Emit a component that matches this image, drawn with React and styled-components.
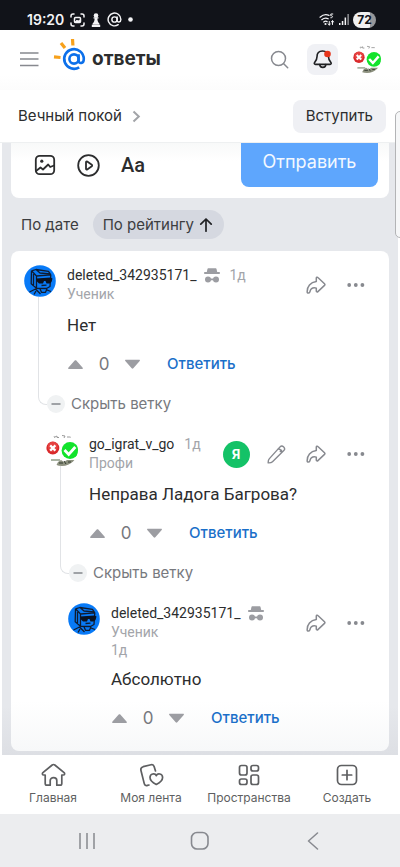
import React from "react";
import styled, { createGlobalStyle } from "styled-components";

const ui = `Inter, "Liberation Sans", sans-serif`;
const body = `Roboto, "Liberation Sans", sans-serif`;

const GlobalStyle = createGlobalStyle`
  * { box-sizing: border-box; }
  body { margin: 0; background: #fff; color: #2c2d2e; font-family: ${body}; }
  button { margin: 0; padding: 0; border: 0; background: none; color: inherit; font: inherit; cursor: pointer; }
  a { color: inherit; text-decoration: none; }
  p, h1 { margin: 0; }
  svg { display: block; flex: none; }
`;

const Page = styled.div`
  position: relative;
  min-height: 100vh;
  display: flex;
  flex-direction: column;
  overflow: hidden;
`;

const StatusBar = styled.div`
  height: 30px;
  padding: 9px 24px 0 27px;
  display: flex;
  align-items: center;
  justify-content: space-between;
  background: #111319;
  color: #f4f4f6;
`;
const StatusGroup = styled.div`
  display: flex;
  align-items: center;
  gap: ${(p) => p.$gap}px;
`;
const Clock = styled.span`
  font: 600 14px/18px ${ui};
`;
const Battery = styled.span`
  width: 23px;
  height: 16px;
  border-radius: 8px;
  background: linear-gradient(90deg, #f0f0f0 72%, #96979a 72%);
  color: #111319;
  font: 700 12px/16px ${ui};
  text-align: center;
`;

const Header = styled.header`
  height: 60px;
  padding: 0 19px 2px;
  display: flex;
  align-items: center;
  justify-content: space-between;
  background: linear-gradient(#fff 75%, #fcfcfc);
`;
const HeaderGroup = styled.div`
  display: flex;
  align-items: center;
  gap: ${(p) => p.$gap}px;
`;
const Logo = styled.a`
  display: flex;
  align-items: center;
  gap: 5px;
  font: 700 19px/24px ${ui};
  color: #2c2d2e;
`;
const IconButton = styled.button`
  display: grid;
  place-items: center;
  width: ${(p) => p.$size || 20}px;
  height: ${(p) => p.$size || 20}px;
  border-radius: 8px;
  background: ${(p) => (p.$filled ? "#f0f1f5" : "transparent")};
  color: ${(p) => p.$color || "#87898f"};
`;

const SpaceBar = styled.div`
  height: 53px;
  padding: 0 14px 0 18px;
  display: flex;
  align-items: center;
  justify-content: space-between;
  border-bottom: 1px solid #eef0f1;
`;
const SpaceLink = styled.a`
  display: flex;
  align-items: center;
  gap: 10px;
  font: 400 15px/20px ${ui};
`;
const JoinButton = styled.button`
  height: 33px;
  padding: 0 13px;
  border-radius: 8px;
  background: #eff0f4;
  && { font: 400 15px/20px ${ui}; }
`;

const Main = styled.main`
  flex: 1;
  margin: 0 2px;
  padding: 0 9px 4px;
  background: linear-gradient(#e6e8ec 92%, #dddfe4);
`;
const Composer = styled.section`
  height: 55px;
  padding: 0 11px 11px 23px;
  display: flex;
  align-items: stretch;
  justify-content: space-between;
  border-radius: 0 0 8px 8px;
  background: linear-gradient(#f8f9f9, #fff 18px);
`;
const Tools = styled.div`
  display: flex;
  align-items: center;
  gap: 21px;
`;
const ToolButton = styled.button`
  display: grid;
  place-items: center;
  min-width: 22px;
  height: 24px;
  && { font: 500 20px/24px ${body}; }
`;
const SendButton = styled.button`
  width: 137px;
  padding-bottom: 7px;
  border-radius: 0 0 8px 8px;
  background: #5ea6fd;
  color: #f3f8ff;
  && { font: 400 18px/24px ${ui}; }
`;

const SortBar = styled.div`
  height: 53px;
  padding-left: 10px;
  display: flex;
  align-items: center;
  gap: 14px;
`;
const SortButton = styled.button`
  height: 29px;
  padding: ${(p) => (p.$active ? "0 11px 0 10px" : "0")};
  display: flex;
  align-items: center;
  gap: 5px;
  border-radius: 15px;
  background: ${(p) => (p.$active ? "#d5d8e0" : "transparent")};
  color: #3c3d40;
  && { font: 400 15px/20px ${ui}; }
`;

const Thread = styled.section`
  padding: 14px 13px 21px;
  border-radius: 8px;
  background: linear-gradient(#fff 90%, #f7f8f9);
`;
const Comment = styled.article`
  margin-left: ${(p) => p.$depth * 22}px;
  display: grid;
  grid-template-columns: 32px 1fr;
  column-gap: 11px;
  & + & { margin-top: 20px; }
`;
const Rail = styled.div`
  grid-row: 1 / span 2;
  display: flex;
  flex-direction: column;
`;
const ThreadLine = styled.span`
  flex: 1;
  width: 9px;
  margin: 0 0 9px 14px;
  border: solid #e1e3e6;
  border-width: 0 0 1px 1px;
  border-bottom-left-radius: 8px;
`;
const CommentHead = styled.header`
  min-height: 40px;
  display: flex;
  align-items: flex-start;
`;
const Author = styled.div`
  flex: 1;
  min-width: 0;
  padding-right: 12px;
  display: flex;
  flex-wrap: wrap;
  column-gap: 10px;
`;
const Name = styled.a`
  display: flex;
  align-items: center;
  gap: 7px;
  font: 400 14px/20px ${body};
`;
const Muted = styled.span`
  display: block;
  font: 400 14px/${(p) => (p.$tall ? 20 : 18)}px ${body};
  color: #a3a5aa;
`;
const Actions = styled.div`
  display: flex;
`;
const Badge = styled.span`
  width: 27px;
  height: 27px;
  border-radius: 50%;
  background: #14c267;
  color: #fff;
  font: 700 13px/27px ${ui};
  text-align: center;
`;
const CommentText = styled.p`
  margin-top: 8px;
  font: 400 17px/24px ${body};
`;
const Votes = styled.div`
  height: 24px;
  margin-top: 15px;
  display: flex;
  align-items: center;
  gap: 14px;
`;
const Score = styled.span`
  min-width: 12px;
  font: 400 17px/24px ${ui};
  color: #77797e;
  text-align: center;
`;
const ReplyButton = styled.button`
  margin-left: 12px;
  color: #1a6fc9;
  && { font: 500 15px/20px ${ui}; }
`;
const Collapse = styled.button`
  grid-column: 2;
  justify-self: start;
  height: 20px;
  margin: 18px 0 0 -20px;
  display: flex;
  align-items: center;
  gap: 6px;
  color: #77797e;
  && { font: 400 15px/20px ${ui}; }
`;

const TabBar = styled.nav`
  height: 59px;
  padding: 8px 4px 0;
  display: grid;
  grid-template-columns: repeat(4, 1fr);
  background: #fff;
  color: #5e5f61;
`;
const Tab = styled.a`
  display: flex;
  flex-direction: column;
  align-items: center;
  gap: 3px;
  font: 400 12px/16px ${ui};
`;
const TabIcon = styled.span`
  height: 24px;
  display: grid;
  place-items: center;
`;
const SystemNav = styled.div`
  height: 53px;
  padding: 0 30px;
  display: grid;
  grid-template-columns: repeat(3, 1fr);
  place-items: center;
  background: #ecedef;
`;
const EdgeHandle = styled.div`
  position: absolute;
  top: 111px;
  right: -8px;
  width: 13px;
  height: 127px;
  border: 1px solid #b3b4b6;
  border-radius: 5px;
  background: #f6f7f8;
`;

const stroke = {
  fill: "none",
  stroke: "currentColor",
  strokeWidth: 1.6,
  strokeLinecap: "round",
  strokeLinejoin: "round",
};

const CaptureIcon = () => (
  <svg width="15" height="14" viewBox="0 0 15 14" {...stroke} strokeWidth="1.5">
    <path d="M1 4V3a2 2 0 0 1 2-2h1M11 1h1a2 2 0 0 1 2 2v1M14 10v1a2 2 0 0 1-2 2h-1M4 13H3a2 2 0 0 1-2-2v-1" />
    <rect x="4.5" y="4.5" width="6" height="5" rx="1" />
    <path d="M5 9l2-2 1 1 2-1v2z" fill="currentColor" strokeWidth=".8" />
  </svg>
);
const PawnIcon = () => (
  <svg width="10" height="14" viewBox="0 0 10 14" fill="currentColor">
    <circle cx="5" cy="2.5" r="2.3" />
    <path d="M2.5 4.2h5v1.2H6.4c0 2.2.5 3.5 2 5v1.2H1.6v-1.2c1.5-1.5 2-2.8 2-5H2.5zM.8 11.8h8.4V14H.8z" />
  </svg>
);
const AtIcon = () => (
  <svg width="15" height="15" viewBox="0 0 24 24" {...stroke} strokeWidth="2.3">
    <circle cx="12" cy="12" r="4.2" />
    <path d="M16.2 8v5.500c0 3.600 6 3.400 6-1.500a10.200 10.200 0 1 0-4.300 8.300" />
  </svg>
);
const DotIcon = () => (
  <svg width="5" height="5" viewBox="0 0 5 5"><circle cx="2.5" cy="2.5" r="2.3" fill="currentColor" /></svg>
);
const WifiIcon = () => (
  <svg width="16" height="13" viewBox="0 0 16 13" {...stroke} strokeWidth="1.2">
    <path d="M1 4.2C4 1.500 7.500 1.200 10 2.400M2.800 6.700C5 4.900 7.300 4.700 9.200 5.800M4.700 9C6 8 7.300 8 8.200 8.700" />
    <path d="M13.800 1h-2v1.800c2.200-.4 2.600 2.200 0 2M10.300 8.500v3.500m-1.300-1.200l1.300 1.200 1.200-1.200M13.500 11.500V7.800m-1.300 1.200l1.300-1.200L14.800 9" strokeWidth="1" />
    <circle cx="6.500" cy="11" r=".5" />
  </svg>
);
const SignalIcon = () => (
  <svg width="10" height="11" viewBox="0 0 10 11" fill="currentColor">
    <path d="M0 9h1.500v2H0zM2.800 7h1.500v4H2.800zM5.600 3.500h1.500V11H5.600z" />
    <path d="M8.400 0h1.500v11H8.400z" opacity=".55" />
  </svg>
);
const MenuIcon = () => (
  <svg width="20" height="16" viewBox="0 0 20 16" stroke="currentColor" strokeWidth="1.5">
    <path d="M1 2h18.500M1 8h18.500M1 14.500h18.500" />
  </svg>
);
const LogoIcon = () => (
  <svg width="34" height="40" viewBox="0 2 34 40" fill="none">
    <path d="M1 19.800l6.500.7M8 6l4 5M19.500 2l.4 6.500" stroke="#f7a11b" strokeWidth="3.200" />
    <g stroke="#0d70ea" strokeWidth="2.600">
      <circle cx="21" cy="22" r="4.600" />
      <path d="M25.600 17.200V23.500c0 3.800 5.200 3.400 5.200-1.500a9.800 9.800 0 1 0-4.600 8.300" />
    </g>
  </svg>
);
const SearchIcon = () => (
  <svg width="19" height="19" viewBox="0 0 19 19" {...stroke} strokeWidth="1.5">
    <circle cx="8.500" cy="8.500" r="7" />
    <path d="M13.700 13.700l4 4" />
  </svg>
);
const BellIcon = () => (
  <svg width="22" height="22" viewBox="0 0 22 22" {...stroke}>
    <path d="M10.500 3C6.800 3 5 5.500 5 8.800c0 3.200-1 4.200-2.400 5.700-.7.800-.2 1.900.8 1.900h14.700c1 0 1.500-1.100.8-1.900-1.400-1.500-2.400-2.500-2.400-5.700C16.500 5.500 14.200 3 10.500 3z" />
    <path d="M7.800 16.500c0 3.800 6 3.800 6 0" />
    <circle cx="15.500" cy="6" r="3.300" fill="#e6351b" stroke="none" />
  </svg>
);
const ChevronIcon = () => (
  <svg width="9" height="13" viewBox="0 0 9 13" {...stroke} stroke="#a2a4a8" strokeWidth="2" strokeLinecap="butt" strokeLinejoin="miter">
    <path d="M1.500 1.500L6.800 6.500l-5.300 5" />
  </svg>
);
const ImageIcon = () => (
  <svg width="22" height="22" viewBox="0 0 22 22" {...stroke} strokeWidth="1.800">
    <rect x="1.800" y="1.800" width="18.400" height="18.400" rx="4" />
    <path d="M2 17l4.500-3.500 2.500 2 5.200-5 2 2.500L20 11.500" />
    <circle cx="7.800" cy="7.200" r="1.600" fill="currentColor" stroke="none" />
  </svg>
);
const PlayIcon = () => (
  <svg width="23" height="23" viewBox="0 0 23 23" {...stroke} strokeWidth="1.800">
    <circle cx="11.500" cy="11.500" r="10.300" />
    <path d="M9 8.200c0-.7.700-1 1.200-.7l4.600 3.200c.5.400.5 1.100 0 1.500l-4.600 3.200c-.5.300-1.200 0-1.200-.7z" />
  </svg>
);
const ArrowUpIcon = () => (
  <svg width="14" height="14" viewBox="0 0 14 14" {...stroke} stroke="#202124" strokeWidth="1.700">
    <path d="M7 13.200V1.200M1.800 6.200L7 1l5.200 5.200" />
  </svg>
);
const IncognitoIcon = () => (
  <svg width="16" height="15" viewBox="0 0 16 15" fill="#9c9da2">
    <path d="M4.500.3h7c.7 0 1 .5 1.100 1L13.200 4H15c.6 0 1 .5 1 1s-.4 1-1 1H1C.4 6 0 5.500 0 5s.4-1 1-1h1.800l.6-2.700c.1-.5.400-1 1.100-1z" />
    <circle cx="4" cy="11.500" r="3" />
    <circle cx="12" cy="11.500" r="3" />
    <path d="M6 10.500h4v1.800H6z" />
  </svg>
);
const ShareIcon = () => (
  <svg width="20" height="18" viewBox="0 0 20 18" {...stroke} strokeWidth="1.500">
    <path d="M10.300 2.200c0-.9 1-1.300 1.600-.7l6.600 6.300c.5.500.5 1.100 0 1.600l-6.600 6.200c-.6.600-1.600.2-1.600-.7v-2.800c-1.900-.7-3.700-.3-5 .8-.9.700-1 1.900-1.600 3.300-.4.900-2.500 1.200-2.500 0C.9 10.500 4.500 6.300 10.300 5.600z" />
  </svg>
);
const MoreIcon = () => (
  <svg width="18" height="4" viewBox="0 0 18 4" fill="currentColor">
    <circle cx="2.200" cy="2" r="1.900" /><circle cx="8.800" cy="2" r="1.900" /><circle cx="15.400" cy="2" r="1.900" />
  </svg>
);
const PencilIcon = () => (
  <svg width="19" height="19" viewBox="0 0 19 19" {...stroke} strokeWidth="1.400">
    <path d="M13 1.900c1.200-1.200 2.700-.9 3.700.1s1.200 2.500.1 3.600L5.500 16.700c-1 1-2.800 1.300-4.300 1.200-.100-1.500.2-3.200 1.200-4.300zM11.200 3.700c2 .4 3.300 1.700 3.700 3.700M13.300 6.500l1.200-1.200" />
  </svg>
);
const VoteIcon = ({ down }) => (
  <svg width="17" height="11" viewBox="0 0 17 11" fill="#9c9da2">
    <path d={down ? "M1.800.8h13.400c.7 0 1 .7.5 1.200L9.300 9.300c-.5.500-1.100.5-1.600 0L1.300 2c-.5-.5-.2-1.200.5-1.200z" : "M1.800 10h13.400c.7 0 1-.7.5-1.200L9.300 1.500c-.5-.5-1.100-.5-1.600 0L1.300 8.800c-.5.500-.2 1.200.5 1.200z"} />
  </svg>
);
const MinusIcon = () => (
  <svg width="18" height="18" viewBox="0 0 18 18">
    <circle cx="9" cy="9" r="9" fill="#f0f2f3" />
    <path d="M4.500 9h9" stroke="#85878c" strokeWidth="1.500" />
  </svg>
);
const MarksAvatar = ({ size, id }) => (
  <svg width={size} height={size} viewBox="0 0 32 32">
    <clipPath id={id}><circle cx="16" cy="16" r="16" /></clipPath>
    <g clipPath={`url(#${id})`}>
      <path fill="#fff" d="M0 0h32v32H0z" />
      <path d="M8 3.500l3-1.500v1.500h2M16 1.500l3 .5-1 2M21 3h4M7 2h2" stroke="#999" fill="none" />
      <path d="M5 25h9v2H5z" fill="#aab4a4" />
      <path d="M12 28l3-2 3 2 3-2h9l-5 6H10z" fill="#8d917f" />
      <path d="M13 29h4M18 27l2 3M22 28h3" stroke="#333a30" />
      <circle cx="6.800" cy="14" r="6.500" fill="#d92a2c" />
      <circle cx="6.800" cy="12.800" r="5" fill="#ef5450" opacity=".6" />
      <path d="M4.200 11.400l5.200 5.200m0-5.200l-5.200 5.200" stroke="#fff" strokeWidth="2.200" />
      <circle cx="24" cy="16.500" r="8.400" fill="#12e32c" />
      <path d="M18.500 16l4.200 4.500 6.600-7.500" fill="none" stroke="#fff" strokeWidth="2.800" />
    </g>
  </svg>
);
const BoxHeadAvatar = () => (
  <svg width="32" height="32" viewBox="0 0 32 32">
    <circle cx="16" cy="16" r="15.800" fill="#087af7" />
    <g fill="none" stroke="#101c30" strokeWidth="1.300" strokeLinejoin="round">
      <path d="M7.500 5.800L12 4.500l12.500 1.800 2.300 3.500M7.500 5.800l5 5.200 14.300-1.200M7.500 5.800l-.3 13 5.300 4.500V11M26.800 9.800l-.8 11.700-3.500 2-10-.2M12 4.500l4 3.500 10 .8M9.500 9v12" />
      <path d="M17.500 20.500l5-.3M16 23.800l1.500 3.500h4l1.500-3.500M5.500 27l6-3 5 5M23 25l4 1.500M12 26l-2 3.500" />
    </g>
    <path d="M12 13.500l14.500-1 2 1-1 3.500-2 1.500h-3l-1-2.500h-1.500l-1 2.500h-4l-2-2z" fill="#0a1220" />
  </svg>
);
const HomeIcon = () => (
  <svg width="25" height="24" viewBox="0 0 25 24" {...stroke} strokeWidth="1.700">
    <path d="M12.500 1.500c.5 0 .9.200 1.300.5l9.300 7.700c1 .9.500 2.300-.7 2.300h-1.600v8.500c0 1-.6 1.700-1.700 1.700h-3.300v-4.700c0-3.800-6.600-3.800-6.600 0v4.700H5.900c-1.100 0-1.700-.7-1.700-1.700V12H2.600C1.400 12 .9 10.600 1.900 9.700L11.200 2c.4-.3.8-.5 1.300-.5z" />
  </svg>
);
const FeedIcon = () => (
  <svg width="25" height="24" viewBox="0 0 25 24" {...stroke} strokeWidth="1.700">
    <path d="M16.500 8l-1.300-4.300c-.5-1.700-1.600-2.300-3.200-1.900L4.200 3.700C2.500 4.200 1.500 5.500 1.900 7.200l3.300 13.200c.4 1.700 1.500 2.500 3.300 2l1.500-.4" />
    <path d="M17.300 12.700c-1.200-2.800-6.300-2.300-6.300 1.800 0 3 3.600 5.600 6.300 7 2.700-1.400 6.300-4 6.300-7 0-4.100-5.100-4.600-6.300-1.800z" />
  </svg>
);
const SpacesIcon = () => (
  <svg width="22" height="22" viewBox="0 0 22 22" {...stroke} strokeWidth="1.700">
    <rect x="1.500" y="1.500" width="7.500" height="9.500" rx="2" />
    <rect x="13" y="1.500" width="7.500" height="5.500" rx="2" />
    <rect x="1.500" y="15" width="7.500" height="5.500" rx="2" />
    <rect x="13" y="11" width="7.500" height="9.500" rx="2" />
  </svg>
);
const CreateIcon = () => (
  <svg width="22" height="22" viewBox="0 0 22 22" {...stroke} strokeWidth="1.700">
    <rect x="1.500" y="1.500" width="19" height="19" rx="4" />
    <path d="M11 6.300v9.400M6.300 11h9.400" />
  </svg>
);

const comments = [
  { name: "deleted_342935171_", hidden: true, role: "Ученик", text: "Нет", replies: true },
  { name: "go_igrat_v_go", own: true, role: "Профи", text: "Неправа Ладога Багрова?", replies: true },
  { name: "deleted_342935171_", hidden: true, role: "Ученик", text: "Абсолютно" },
];

const tabs = [
  ["Главная", HomeIcon],
  ["Моя лента", FeedIcon],
  ["Пространства", SpacesIcon],
  ["Создать", CreateIcon],
];

function CommentItem({ item, depth }) {
  return (
    <Comment $depth={depth}>
      <Rail>
        {item.own ? <MarksAvatar size={32} id="comment-avatar" /> : <BoxHeadAvatar />}
        {item.replies && <ThreadLine />}
      </Rail>
      <div>
        <CommentHead>
          <Author>
            <div>
              <Name href="#">{item.name}{item.hidden && <IncognitoIcon />}</Name>
              <Muted>{item.role}</Muted>
            </div>
            <Muted $tall={item.replies}>1д</Muted>
          </Author>
          <Actions>
            {item.own && (
              <>
                <IconButton $size={40} aria-label="Автор"><Badge>Я</Badge></IconButton>
                <IconButton $size={40} aria-label="Изменить"><PencilIcon /></IconButton>
              </>
            )}
            <IconButton $size={40} aria-label="Поделиться"><ShareIcon /></IconButton>
            <IconButton $size={40} aria-label="Ещё"><MoreIcon /></IconButton>
          </Actions>
        </CommentHead>
        <CommentText>{item.text}</CommentText>
        <Votes>
          <button aria-label="За"><VoteIcon /></button>
          <Score>0</Score>
          <button aria-label="Против"><VoteIcon down /></button>
          <ReplyButton>Ответить</ReplyButton>
        </Votes>
      </div>
      {item.replies && <Collapse><MinusIcon />Скрыть ветку</Collapse>}
    </Comment>
  );
}

export default function App() {
  return (
    <Page>
      <GlobalStyle />
      <StatusBar>
        <StatusGroup $gap={6}>
          <Clock>19:20</Clock>
          <CaptureIcon /><PawnIcon /><AtIcon /><DotIcon />
        </StatusGroup>
        <StatusGroup $gap={4}>
          <WifiIcon /><SignalIcon /><Battery>72</Battery>
        </StatusGroup>
      </StatusBar>
      <Header>
        <HeaderGroup $gap={14}>
          <IconButton aria-label="Меню"><MenuIcon /></IconButton>
          <Logo href="#"><LogoIcon />ответы</Logo>
        </HeaderGroup>
        <HeaderGroup $gap={15}>
          <IconButton $size={26} aria-label="Поиск"><SearchIcon /></IconButton>
          <IconButton $size={31} $filled $color="#1f2023" aria-label="Уведомления"><BellIcon /></IconButton>
          <IconButton $size={28} aria-label="Профиль"><MarksAvatar size={28} id="profile-avatar" /></IconButton>
        </HeaderGroup>
      </Header>
      <SpaceBar>
        <SpaceLink href="#">Вечный покой<ChevronIcon /></SpaceLink>
        <JoinButton>Вступить</JoinButton>
      </SpaceBar>
      <Main>
        <Composer>
          <Tools>
            <ToolButton aria-label="Фото"><ImageIcon /></ToolButton>
            <ToolButton aria-label="Видео"><PlayIcon /></ToolButton>
            <ToolButton>Aa</ToolButton>
          </Tools>
          <SendButton>Отправить</SendButton>
        </Composer>
        <SortBar>
          <SortButton>По дате</SortButton>
          <SortButton $active>По рейтингу<ArrowUpIcon /></SortButton>
        </SortBar>
        <Thread>
          {comments.map((item, i) => <CommentItem key={i} item={item} depth={i} />)}
        </Thread>
      </Main>
      <TabBar>
        {tabs.map(([label, Icon]) => (
          <Tab href="#" key={label}><TabIcon><Icon /></TabIcon>{label}</Tab>
        ))}
      </TabBar>
      <SystemNav>
        <IconButton $size={24} aria-label="Недавние">
          <svg width="18" height="18" viewBox="0 0 18 18" stroke="currentColor" strokeWidth="1.500"><path d="M2 1v16M9 1v16M16 1v16" /></svg>
        </IconButton>
        <IconButton $size={24} aria-label="Домой">
          <svg width="20" height="20" viewBox="0 0 20 20" {...stroke}><rect x="1.500" y="1.500" width="16.500" height="16.500" rx="5.500" /></svg>
        </IconButton>
        <IconButton $size={24} aria-label="Назад">
          <svg width="12" height="18" viewBox="0 0 12 18" {...stroke} strokeWidth="1.500"><path d="M10.500 1L1.500 9l9 8" /></svg>
        </IconButton>
      </SystemNav>
      <EdgeHandle />
    </Page>
  );
}
